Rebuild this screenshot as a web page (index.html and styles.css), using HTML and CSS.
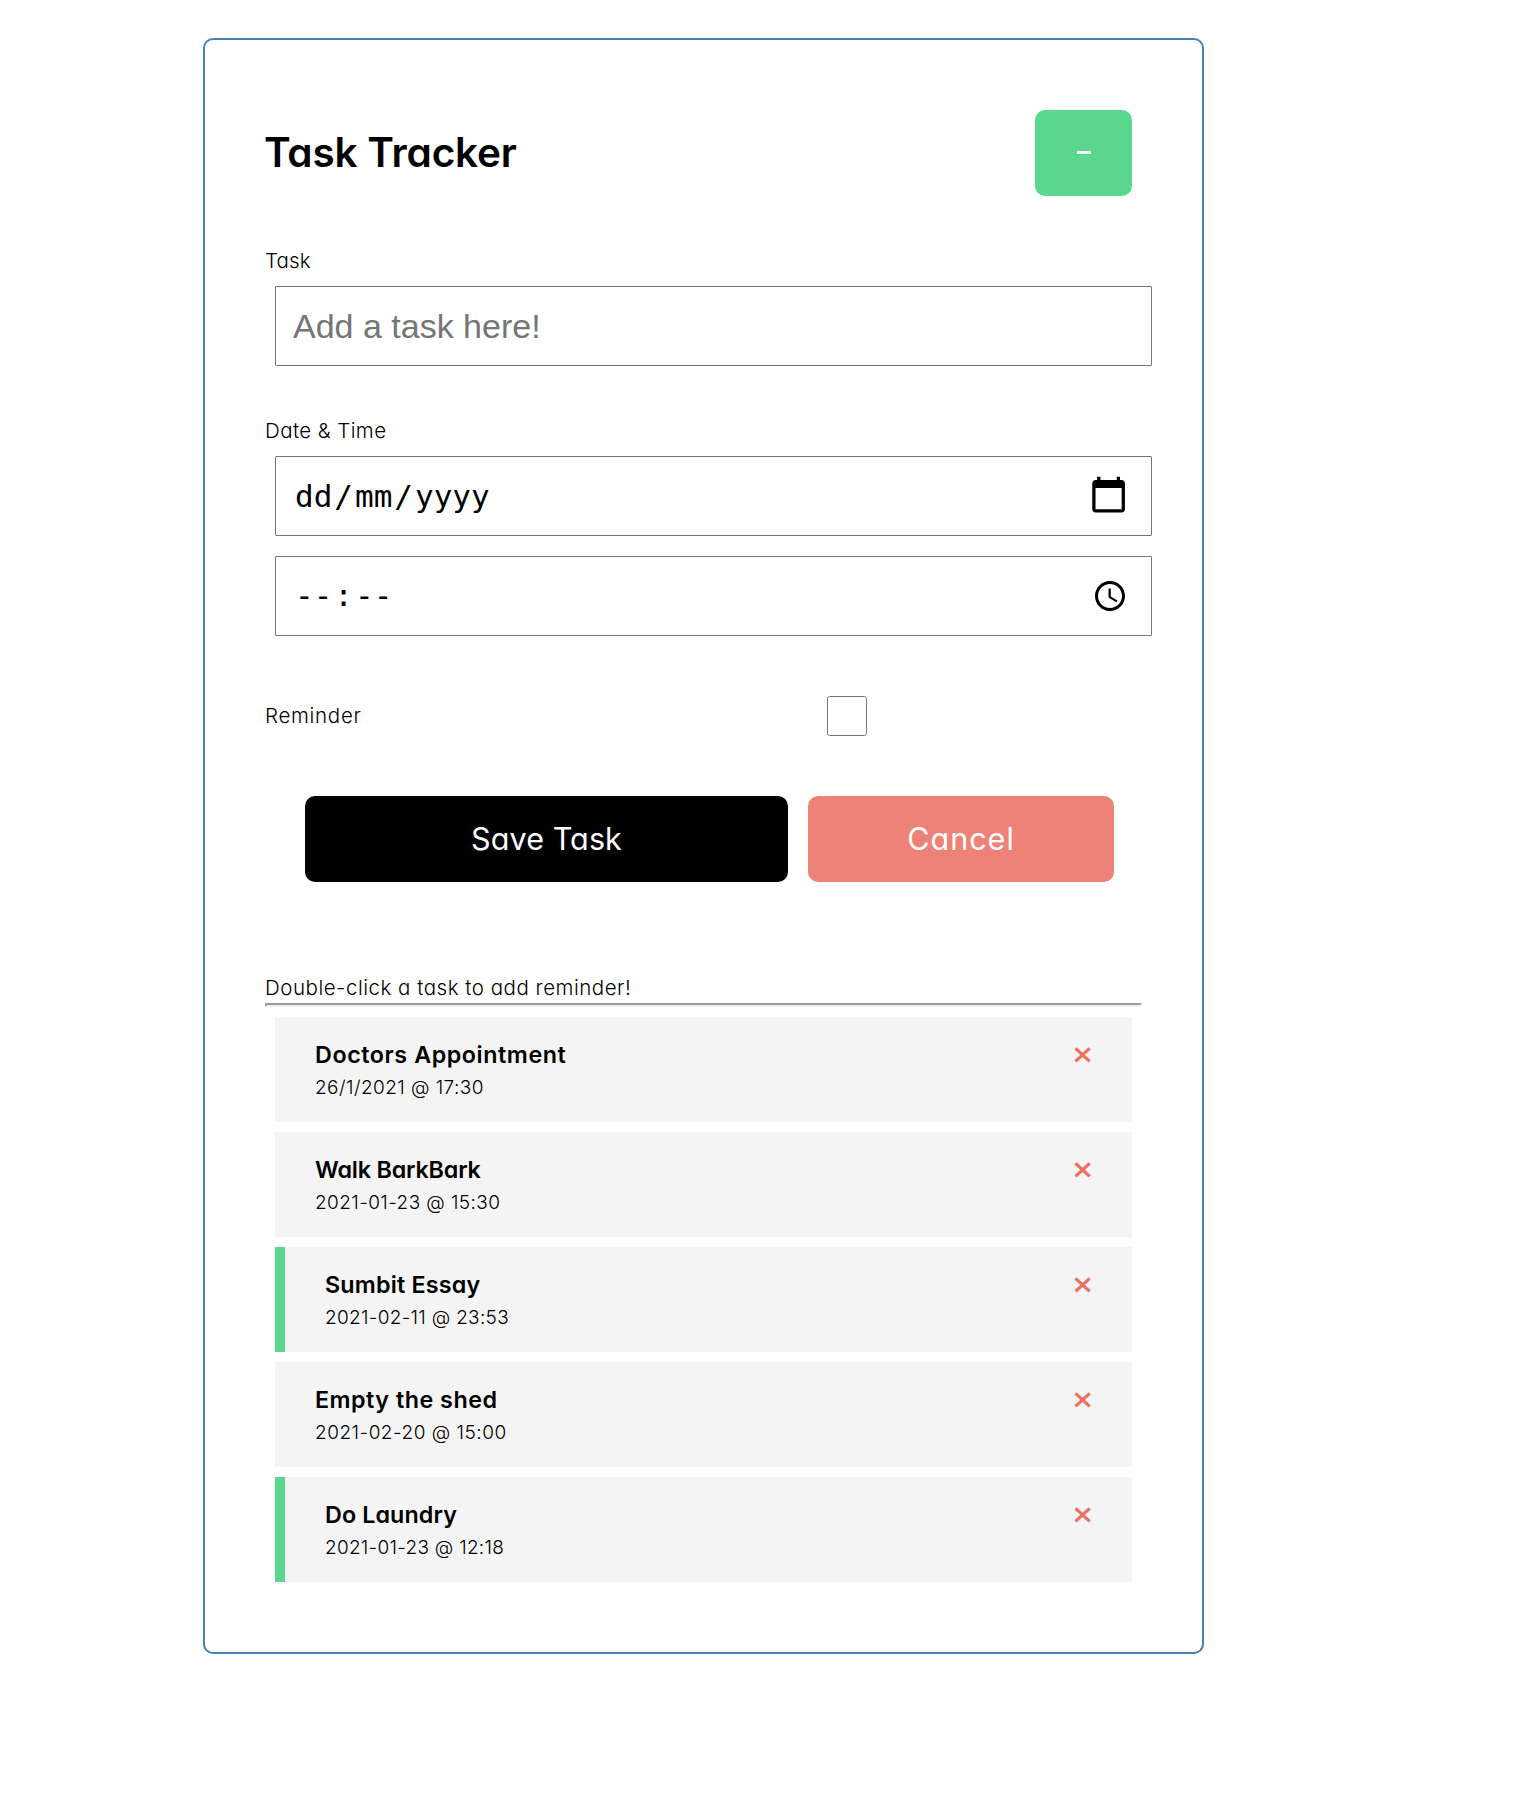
FILE: index.html
```
<!DOCTYPE html>
<html lang="en">
<head>
<meta charset="utf-8">
<title>Task Tracker</title>
<link rel="stylesheet" href="styles.css">
</head>
<body>
<main class="card">
  <header class="header"><h1>Task Tracker</h1><button class="btn toggle" aria-label="Close form"><i class="dash"></i></button></header>
  <form class="form">
    <label class="label label-task">Task</label>
    <input class="field text" type="text" placeholder="Add a task here!">
    <label class="label label-date">Date &amp; Time</label>
    <div class="field picker"><div class="mono"><b>dd</b>/<b>mm</b>/<b>yyyy</b></div>
      <svg class="calendar" viewBox="0 0 24 24"><path d="M20 3h-1V1h-2v2H7V1H5v2H4c-1.1 0-2 .9-2 2v16c0 1.1.9 2 2 2h16c1.1 0 2-.9 2-2V5c0-1.1-.9-2-2-2zm0 18H4V8h16v13z"/></svg></div>
    <div class="field picker time"><div class="mono"><b>--</b>:<b>--</b></div>
      <svg class="clock" viewBox="0 0 24 24"><path d="M11.99 2C6.47 2 2 6.48 2 12s4.47 10 9.99 10C17.52 22 22 17.52 22 12S17.52 2 11.99 2zM12 20c-4.42 0-8-3.58-8-8s3.58-8 8-8 8 3.58 8 8-3.58 8-8 8zm.5-13H11v6l5.25 3.15.75-1.23-4.5-2.67z"/></svg></div>
    <div class="reminder"><label class="label label-reminder">Reminder</label><input class="check" type="checkbox"></div>
    <div class="actions"><button type="button" class="btn save">Save Task</button><button type="button" class="btn cancel">Cancel</button></div>
  </form>
  <p class="label hint">Double-click a task to add reminder!</p>
  <hr>
  <section class="tasks">
    <article class="task doctors"><div><h3>Doctors Appointment</h3><p class="label when">26/1/2021 @ 17:30</p></div><svg class="x" viewBox="0 0 18 16"><path d="M1.5 1.4l14.2 13M15.7 1.4l-14.2 13"/></svg></article>
    <article class="task walk"><div><h3>Walk BarkBark</h3><p class="label when">2021-01-23 @ 15:30</p></div><svg class="x" viewBox="0 0 18 16"><path d="M1.5 1.4l14.2 13M15.7 1.4l-14.2 13"/></svg></article>
    <article class="task essay on"><div><h3>Sumbit Essay</h3><p class="label when">2021-02-11 @ 23:53</p></div><svg class="x" viewBox="0 0 18 16"><path d="M1.5 1.4l14.2 13M15.7 1.4l-14.2 13"/></svg></article>
    <article class="task shed"><div><h3>Empty the shed</h3><p class="label when">2021-02-20 @ 15:00</p></div><svg class="x" viewBox="0 0 18 16"><path d="M1.5 1.4l14.2 13M15.7 1.4l-14.2 13"/></svg></article>
    <article class="task laundry on"><div><h3>Do Laundry</h3><p class="label when">2021-01-23 @ 12:18</p></div><svg class="x" viewBox="0 0 18 16"><path d="M1.5 1.4l14.2 13M15.7 1.4l-14.2 13"/></svg></article>
  </section>
</main>
</body>
</html>
```
FILE: styles.css
```
* { box-sizing: border-box; }
body { margin: 0; padding: 38px 0 0 203px; background: #fff; color: #000; font-family: Inter, "Open Sans", sans-serif; font-feature-settings: "cv11"; }
h1, h3, p { margin: 0; }
.card { width: 1001px; height: 1616px; padding: 70px 60px; border: 2px solid steelblue; border-radius: 10px; }
.header { display: flex; justify-content: space-between; align-items: center; height: 86px; margin: 0 10px 50px 0; }
h1 { margin-left: -1px; font-size: 40.5px; font-weight: 570; line-height: 60px; letter-spacing: -0.2px; }
.btn { display: flex; align-items: center; justify-content: center; height: 86px; padding: 0 0 2px; border: 0; border-radius: 10px; color: #fff; font-family: inherit; font-feature-settings: inherit; font-size: 30.5px; font-weight: 400; }
.toggle { width: 97px; background: #5ad78e; }
.dash { width: 14px; height: 3px; background: #fff; }
.label { display: block; height: 30px; font-size: 20.5px; font-weight: 300; line-height: 30px; white-space: nowrap; }
.label-task { letter-spacing: 0.15px; }
.label-date { margin-top: 50px; letter-spacing: 0.42px; }
.label-reminder { letter-spacing: 0.7px; }
.hint { letter-spacing: 0.52px; }
.field { display: flex; width: 877px; height: 80px; margin: 10px 0 0 10px; padding: 0 17px; border: 1px solid #767676; border-radius: 1px; background: #fff; }
.text { font: 34px "Liberation Sans", Arial, sans-serif; }
.text::placeholder { color: #757575; }
.picker { align-items: center; justify-content: space-between; }
.mono { font: 31px/40px "DejaVu Sans Mono", monospace; }
.mono b { padding: 0 2px; font-weight: 400; }
.time { margin-top: 20px; }
.time .mono { margin-bottom: 2px; }
.calendar { width: 39.2px; height: 39.2px; margin: 0 6.2px 2px 0; }
.clock { width: 36px; height: 36px; margin-right: 6px; }
.reminder { display: flex; align-items: center; height: 40px; margin-top: 60px; }
.reminder .label { width: 561.5px; }
.check { width: 40px; height: 40px; margin: 0; }
.actions { display: flex; gap: 20px; margin: 60px 28px 91px 40px; }
.save { flex: 0 0 483px; background: #000; letter-spacing: 0.1px; }
.cancel { flex: 1; background: #ee8277; letter-spacing: 1px; }
hr { height: 4px; margin: 0 0 10px; border: 2px solid; border-color: #9a9a9a #eee #eee #9a9a9a; }
.tasks { display: grid; gap: 10px; margin: 0 10px; }
.task { display: flex; justify-content: space-between; height: 105px; padding: 23px 40px 0; background: #f4f4f4; }
.task.on { border-left: 10px solid #5ad78e; }
h3 { height: 30px; margin-bottom: 2px; font-size: 23.3px; font-weight: 600; line-height: 30px; }
.when { padding-top: 1px; font-size: 19px; }
.doctors h3 { letter-spacing: 0.56px; }
.doctors .when { letter-spacing: 0.43px; }
.walk h3 { letter-spacing: -0.17px; }
.walk .when { letter-spacing: 0.41px; }
.essay h3 { letter-spacing: 0.2px; }
.essay .when { letter-spacing: 0.3px; }
.shed h3 { letter-spacing: 0.5px; }
.shed .when { letter-spacing: 0.5px; }
.laundry h3 { letter-spacing: 0.1px; }
.laundry .when { letter-spacing: 0.27px; }
.x { width: 18px; height: 16px; margin-top: 7px; fill: none; stroke: #ee7060; stroke-width: 3.3; }
```
